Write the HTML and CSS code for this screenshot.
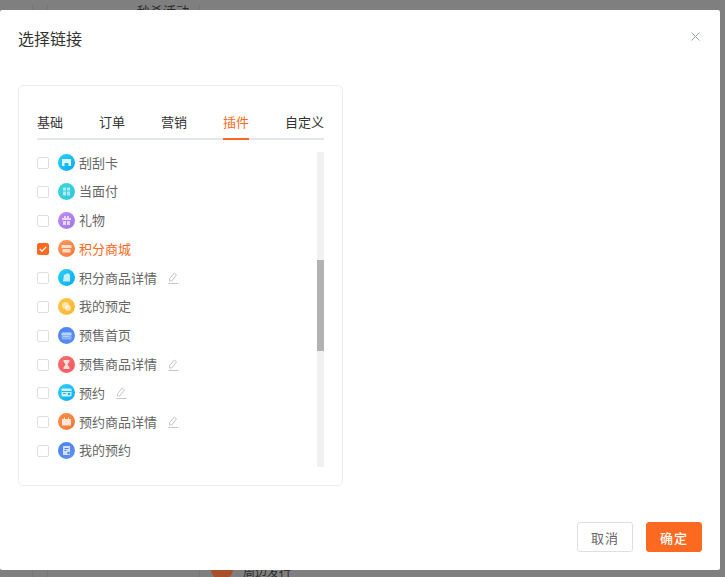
FILE: index.html
```html
<!DOCTYPE html>
<html>
  <head>
    <title>选择链接</title>
    <link rel="stylesheet" href="styles.css">
  </head>
  <body>
    <!-- Page behind the dialog -->
    <div class="backdrop">
      <div class="back-line line-a"></div>
      <div class="back-line line-b"></div>
      <div class="back-line line-c"></div>
      <div class="back-top">秒杀活动</div>
      <div class="back-bottom"><span class="back-dot"></span>周边发行</div>
    </div>

    <div class="dialog">
      <div class="dialog-head">
        <h1>选择链接</h1>
        <svg class="close" width="9" height="9" viewBox="0 0 9 9"><path d="M.5.5l8 8M8.500.5l-8 8" stroke="#8fa3b5" fill="none"/></svg>
      </div>

      <div class="dialog-body">
        <div class="link-card">
          <div class="tabs">
            <span class="tab">基础</span>
            <span class="tab">订单</span>
            <span class="tab">营销</span>
            <span class="tab active">插件</span>
            <span class="tab">自定义</span>
          </div>

          <div class="list-wrap">
            <ul class="link-list">
              <li>
                <span class="check"></span>
                <svg class="ico" viewBox="0 0 17 17"><defs><linearGradient id="g1" x1="0" y1="0" x2="1" y2="1"><stop offset="0" stop-color="#2cd3f5"/><stop offset="1" stop-color="#0aa8fb"/></linearGradient></defs><circle cx="8.500" cy="8.500" r="8.500" fill="url(#g1)"/><path d="M4 5h9v7h-2.500V9h-4v3H4z" fill="#fff" opacity=".85"/></svg>
                <span class="name">刮刮卡</span>
              </li>
              <li>
                <span class="check"></span>
                <svg class="ico" viewBox="0 0 17 17"><defs><linearGradient id="g2" x1="0" y1="0" x2="1" y2="1"><stop offset="0" stop-color="#3fd8d8"/><stop offset="1" stop-color="#2fc4e8"/></linearGradient></defs><circle cx="8.500" cy="8.500" r="8.500" fill="url(#g2)"/><path d="M5 4.500h3v3H5zM9 4.500h3v3H9zM5 8.500h3v4H5zM9 8.500h3v4H9z" fill="#fff" opacity=".6"/></svg>
                <span class="name">当面付</span>
              </li>
              <li>
                <span class="check"></span>
                <svg class="ico" viewBox="0 0 17 17"><defs><linearGradient id="g3" x1="0" y1="0" x2="1" y2="1"><stop offset="0" stop-color="#c08cf5"/><stop offset="1" stop-color="#9f78ee"/></linearGradient></defs><circle cx="8.500" cy="8.500" r="8.500" fill="url(#g3)"/><path d="M4 6h9v2H4zM5 9h3v4H5zM9 9h3v4H9zM6 4h2v2H6zM9 4h2v2H9z" fill="#fff" opacity=".7"/></svg>
                <span class="name">礼物</span>
              </li>
              <li class="checked">
                <span class="check"><svg width="8" height="6" viewBox="0 0 8 6"><path d="M.8 3l2.200 2.200L7.200.8" stroke="#fff" stroke-width="1.200" fill="none"/></svg></span>
                <svg class="ico" viewBox="0 0 17 17"><defs><linearGradient id="g4" x1="0" y1="0" x2="1" y2="1"><stop offset="0" stop-color="#fb9a5c"/><stop offset="1" stop-color="#f6793c"/></linearGradient></defs><circle cx="8.500" cy="8.500" r="8.500" fill="url(#g4)"/><path d="M3.500 5h10v3h-10zM4.500 9h8v3.500h-8z" fill="#fff" opacity=".7"/></svg>
                <span class="name">积分商城</span>
              </li>
              <li>
                <span class="check"></span>
                <svg class="ico" viewBox="0 0 17 17"><defs><linearGradient id="g5" x1="0" y1="0" x2="1" y2="1"><stop offset="0" stop-color="#2cd3f5"/><stop offset="1" stop-color="#0aa8fb"/></linearGradient></defs><circle cx="8.500" cy="8.500" r="8.500" fill="url(#g5)"/><path d="M6 6l4-2 2 2v6.500H5z" fill="#fff" opacity=".75"/></svg>
                <span class="name">积分商品详情</span>
                <svg class="edit" viewBox="0 0 11 12"><path d="M1.500 9V6.800L6.300 1l2.200 1.800L3.800 9zM.5 11.500h10" stroke="#c6c6c6" fill="none"/></svg>
              </li>
              <li>
                <span class="check"></span>
                <svg class="ico" viewBox="0 0 17 17"><defs><linearGradient id="g6" x1="0" y1="0" x2="1" y2="1"><stop offset="0" stop-color="#fdc848"/><stop offset="1" stop-color="#fbb431"/></linearGradient></defs><circle cx="8.500" cy="8.500" r="8.500" fill="url(#g6)"/><circle cx="7.500" cy="7.500" r="3.500" fill="#fff" opacity=".55"/><circle cx="10" cy="10" r="3" fill="#fff" opacity=".55"/></svg>
                <span class="name">我的预定</span>
              </li>
              <li>
                <span class="check"></span>
                <svg class="ico" viewBox="0 0 17 17"><defs><linearGradient id="g7" x1="0" y1="0" x2="1" y2="1"><stop offset="0" stop-color="#4a83f5"/><stop offset="1" stop-color="#5a8ef7"/></linearGradient></defs><circle cx="8.500" cy="8.500" r="8.500" fill="url(#g7)"/><rect x="3.500" y="5" width="10" height="7.500" rx="1" fill="#fff" opacity=".35"/><path d="M3.500 7h10" stroke="#fff" opacity=".8"/><path d="M5.500 9.500h6" stroke="#fff" stroke-dasharray="1 1" opacity=".7"/></svg>
                <span class="name">预售首页</span>
              </li>
              <li>
                <span class="check"></span>
                <svg class="ico" viewBox="0 0 17 17"><defs><linearGradient id="g8" x1="0" y1="0" x2="1" y2="1"><stop offset="0" stop-color="#fb6b6b"/><stop offset="1" stop-color="#f55a5f"/></linearGradient></defs><circle cx="8.500" cy="8.500" r="8.500" fill="url(#g8)"/><path d="M5.500 4h6v1.500L9.500 8.500l2 3V13h-6v-1.500l2-3-2-3z" fill="#fff" opacity=".8"/></svg>
                <span class="name">预售商品详情</span>
                <svg class="edit" viewBox="0 0 11 12"><path d="M1.500 9V6.800L6.300 1l2.200 1.800L3.800 9zM.5 11.500h10" stroke="#c6c6c6" fill="none"/></svg>
              </li>
              <li>
                <span class="check"></span>
                <svg class="ico" viewBox="0 0 17 17"><defs><linearGradient id="g9" x1="0" y1="0" x2="1" y2="1"><stop offset="0" stop-color="#2cd3f5"/><stop offset="1" stop-color="#0aa8fb"/></linearGradient></defs><circle cx="8.500" cy="8.500" r="8.500" fill="url(#g9)"/><rect x="3.500" y="4.500" width="10" height="8" rx="1" fill="#fff" opacity=".8"/><path d="M3.500 7.500h10" stroke="#1cb4f5"/><path d="M5 9.500h3" stroke="#1cb4f5"/><circle cx="11" cy="10" r="1.300" fill="#1cb4f5"/></svg>
                <span class="name">预约</span>
                <svg class="edit" viewBox="0 0 11 12"><path d="M1.500 9V6.800L6.300 1l2.200 1.800L3.800 9zM.5 11.500h10" stroke="#c6c6c6" fill="none"/></svg>
              </li>
              <li>
                <span class="check"></span>
                <svg class="ico" viewBox="0 0 17 17"><defs><linearGradient id="g10" x1="0" y1="0" x2="1" y2="1"><stop offset="0" stop-color="#fd8f4a"/><stop offset="1" stop-color="#f8763a"/></linearGradient></defs><circle cx="8.500" cy="8.500" r="8.500" fill="url(#g10)"/><path d="M4 6h2V4.500h1V6h3V4.500h1V6h2v6.500H4z" fill="#fff" opacity=".8"/></svg>
                <span class="name">预约商品详情</span>
                <svg class="edit" viewBox="0 0 11 12"><path d="M1.500 9V6.800L6.300 1l2.200 1.800L3.800 9zM.5 11.500h10" stroke="#c6c6c6" fill="none"/></svg>
              </li>
              <li>
                <span class="check"></span>
                <svg class="ico" viewBox="0 0 17 17"><defs><linearGradient id="g11" x1="0" y1="0" x2="1" y2="1"><stop offset="0" stop-color="#4a83f5"/><stop offset="1" stop-color="#5e90f7"/></linearGradient></defs><circle cx="8.500" cy="8.500" r="8.500" fill="url(#g11)"/><path d="M5 4h7v9H5z" fill="#fff" opacity=".75"/><path d="M6.500 6.500h4M6.500 8.500h2" stroke="#4a83f5"/><circle cx="10.500" cy="11" r="1.300" fill="#4a83f5"/></svg>
                <span class="name">我的预约</span>
              </li>
            </ul>
            <div class="scroll-track"><div class="scroll-thumb"></div></div>
          </div>
        </div>
      </div>

      <div class="dialog-foot">
        <button class="btn">取消</button>
        <button class="btn btn-primary">确定</button>
      </div>
    </div>
  </body>
</html>
```

FILE: styles.css
```css
html, body {
  margin: 0;
  padding: 0;
  height: 100%;
}
body {
  width: 725px;
  height: 577px;
  overflow: hidden;
  position: relative;
  background-color: #7f7f7f;
  font-family: "Noto Sans CJK SC", "Liberation Sans", sans-serif;
  font-size: 13px;
  color: #333333;
}

/* Page behind the overlay */
.backdrop {
  position: absolute;
  inset: 0;
}
.back-line {
  position: absolute;
  top: 5px;
  bottom: 0;
  width: 1px;
  background-color: #767676;
}
.line-a {
  left: 47px;
}
.line-b {
  left: 199px;
}
.line-c {
  left: 32px;
}
.back-top {
  position: absolute;
  left: 137px;
  top: 4px;
  font-size: 13px;
  line-height: 13px;
  color: #2a2a2a;
}
.back-bottom {
  position: absolute;
  left: 211px;
  top: 558px;
  display: flex;
  align-items: flex-start;
  gap: 10px;
  font-size: 12px;
  line-height: 27px;
  color: #2a2a2a;
}
.back-dot {
  width: 22px;
  height: 22px;
  border-radius: 50%;
  background-color: #a8502a;
}

/* Dialog */
.dialog {
  position: absolute;
  left: 0;
  top: 10px;
  width: 720px;
  height: 560px;
  background-color: #ffffff;
  border-radius: 2px;
  display: flex;
  flex-direction: column;
}
.dialog-head {
  height: 75px;
  padding: 17px 18px 0;
  box-sizing: border-box;
  display: flex;
  justify-content: space-between;
}
.dialog-head h1 {
  margin: 0;
  font-size: 16px;
  font-weight: 400;
  line-height: 22px;
  color: #333333;
}
.close {
  margin: 5px 2px 0 0;
}
.dialog-body {
  padding: 0 18px;
  flex: 1;
}
.dialog-foot {
  padding: 0 18px 18px;
  display: flex;
  justify-content: flex-end;
  gap: 13px;
}

/* Link card */
.link-card {
  width: 325px;
  height: 401px;
  box-sizing: border-box;
  border: 1px solid #ebedf3;
  border-radius: 5px;
  padding: 18px 18px 0;
}
.tabs {
  display: flex;
  gap: 36px;
  border-bottom: 2px solid #e4e6ee;
  height: 34px;
}
.tab {
  height: 34px;
  line-height: 36px;
  color: #333333;
  flex-shrink: 0;
}
.tab.active {
  color: #fc6a21;
  border-bottom: 2px solid #fc6a21;
}
.list-wrap {
  margin-top: 12px;
  height: 315px;
  display: flex;
  justify-content: space-between;
}
.link-list {
  list-style: none;
  margin: -3.4px 0 0;
  padding: 0;
}
.link-list li {
  height: 28.8px;
  display: flex;
  align-items: center;
  color: #666666;
}
.check {
  width: 12px;
  height: 12px;
  box-sizing: border-box;
  border: 1px solid #dcdfe6;
  border-radius: 2px;
  margin-right: 9px;
  display: flex;
  align-items: center;
  justify-content: center;
}
.checked .check {
  background-color: #fc6a21;
  border-color: #fc6a21;
}
.checked .name {
  color: #fc6a21;
}
.name {
  margin-bottom: 2px;
}
.ico {
  width: 17px;
  height: 17px;
  margin: 0 4px 1px 0;
}
.edit {
  width: 11px;
  height: 12px;
  margin-left: 11px;
}
.scroll-track {
  width: 7px;
  height: 315px;
  background-color: #f1f1f1;
  padding-top: 108px;
  box-sizing: border-box;
}
.scroll-thumb {
  height: 91px;
  background-color: #b2b2b2;
}

/* Buttons */
.btn {
  width: 56px;
  height: 30px;
  box-sizing: border-box;
  border: 1px solid #dcdfe6;
  border-radius: 3px;
  background-color: #ffffff;
  color: #666666;
  font-family: inherit;
  font-size: 13px;
  letter-spacing: 1px;
  padding: 0;
}
.btn-primary {
  background-color: #fc6a21;
  border-color: #fc6a21;
  color: #ffffff;
  font-weight: 500;
}
```
